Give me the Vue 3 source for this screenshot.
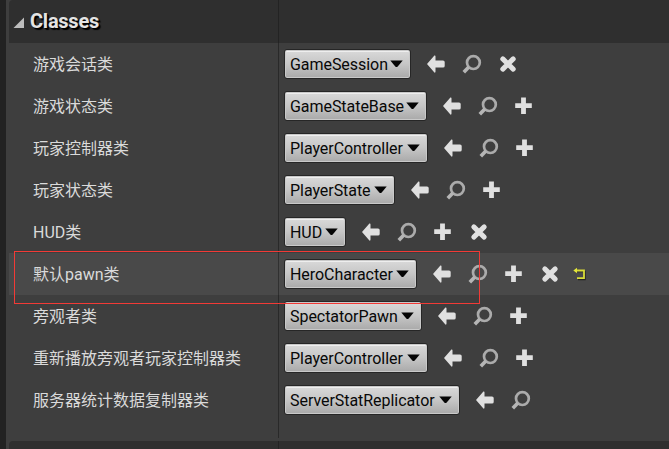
<script setup>
const rows = [
  { label: '游戏会话类', value: 'GameSession', width: 127, icons: ['arrow', 'search', 'clear'] },
  { label: '游戏状态类', value: 'GameStateBase', width: 143, icons: ['arrow', 'search', 'add'] },
  { label: '玩家控制器类', value: 'PlayerController', width: 144, icons: ['arrow', 'search', 'add'] },
  { label: '玩家状态类', value: 'PlayerState', width: 111, icons: ['arrow', 'search', 'add'] },
  { label: 'HUD类', value: 'HUD', width: 62, icons: ['arrow', 'search', 'add', 'clear'] },
  { label: '默认pawn类', value: 'HeroCharacter', width: 133, icons: ['arrow', 'search', 'add', 'clear', 'reset'], active: true },
  { label: '旁观者类', value: 'SpectatorPawn', width: 138, icons: ['arrow', 'search', 'add'] },
  { label: '重新播放旁观者玩家控制器类', value: 'PlayerController', width: 144, icons: ['arrow', 'search', 'add'] },
  { label: '服务器统计数据复制器类', value: 'ServerStatReplicator', width: 176, icons: ['arrow', 'search'] }
]
</script>

<template>
  <div class="panel">
    <div class="content">
      <header class="header">
        <svg class="expander" width="12" height="12" viewBox="0 0 12 12"><path d="M11 0.5V11H0.5Z" fill="#bdbdbd" /></svg>
        <span class="title">Classes</span>
      </header>
      <main class="rows">
        <div v-for="(row, i) in rows" :key="i" class="row" :class="{ active: row.active }">
          <div class="label">{{ row.label }}</div>
          <div class="value">
            <button class="combo" :style="{ width: row.width + 'px' }">
              <span>{{ row.value }}</span>
              <svg width="13" height="8" viewBox="0 0 13 8"><path d="M0.3 0.6H12.7L7.7 6.4Q6.5 7.6 5.3 6.4Z" fill="#050505" /></svg>
            </button>
            <div class="icons">
              <span v-for="icon in row.icons" :key="icon" class="icon" :class="icon">
                <svg v-if="icon === 'arrow'" width="20" height="20" viewBox="0 0 20 20"><path d="M1 10L8.4 1.5Q9.5 1 9.5 2.5V6.5H17Q18.7 6.5 18.7 8V12Q18.7 13.5 17 13.5H9.5V17.5Q9.5 19 8.4 18.5Z" fill="#e0e0e0" /></svg>
                <svg v-else-if="icon === 'search'" width="20" height="20" viewBox="0 0 20 20"><circle cx="11.4" cy="8.6" r="6.4" fill="none" stroke="#ababab" stroke-width="2.7" /><path d="M6.8 13L1.8 18.2" stroke="#b5b5b5" stroke-width="3.6" /></svg>
                <svg v-else-if="icon === 'add'" width="20" height="20" viewBox="0 0 20 20"><path d="M9.5 1.4V18M1.2 9.7H17.8" fill="none" stroke="#e0e0e0" stroke-width="4.8" /></svg>
                <svg v-else-if="icon === 'clear'" width="20" height="20" viewBox="0 0 20 20"><path d="M4.8 4.9L15.2 15.1M15.2 4.9L4.8 15.1" stroke="#e0e0e0" stroke-width="5" stroke-linecap="round" /></svg>
                <svg v-else width="14" height="14" viewBox="0 0 14 14"><g fill="none"><path d="M3 4.5H12V12.5H5" stroke="#252525" stroke-width="1.5" /><path d="M2 3.5H11V11.2H4" stroke="#d9dc38" stroke-width="1.8" /></g><path d="M0.3 3.5L4 0.8V6.2Z" fill="#e2e53a" /></svg>
              </span>
            </div>
          </div>
        </div>
      </main>
      <footer class="next"></footer>
    </div>
    <div class="highlight"></div>
  </div>
</template>

<style>
body { background: #3e3e3e; }
</style>

<style scoped>
.panel {
  position: relative;
  box-sizing: border-box;
  width: 669px;
  height: 449px;
  overflow: hidden;
  border-left: 6px solid #222;
  background: #3e3e3e;
  padding-left: 3px;
  font-family: Roboto, "Noto Sans CJK SC", sans-serif;
}
.content { display: flex; flex-direction: column; height: 449px; }
.header {
  display: flex;
  align-items: center;
  height: 43px;
  box-sizing: border-box;
  padding: 0 0 1px 4px;
  background: linear-gradient(90deg, transparent 269px, #232323 269px 270px, transparent 270px) #2f2f2f;
  border-top-left-radius: 4px;
}
.expander { margin-top: 4px; }
.title {
  margin-left: 5px;
  font-size: 20px;
  line-height: 24px;
  font-weight: 700;
  letter-spacing: -0.25px;
  color: #e4e4e4;
  text-shadow: 1px 1px 0 #000, 2px 2px 1px #000;
}
.rows { height: 395px; background: linear-gradient(90deg, transparent 269px, #292929 269px 270px, transparent 270px); }
.row { display: grid; grid-template-columns: 270px 1fr; height: 42px; }
.row.active { background: linear-gradient(90deg, transparent 269px, #303030 269px 270px, transparent 270px) #494949; }
.label {
  display: flex;
  align-items: center;
  padding: 0 0 2px 24px;
  color: #dadada;
  font-size: 16px;
  white-space: nowrap;
}
.value { display: flex; align-items: center; padding-left: 5px; }
.combo {
  box-sizing: border-box;
  display: flex;
  align-items: center;
  justify-content: space-between;
  flex: none;
  height: 30px;
  padding: 0 7px 0 5px;
  border: 1px solid #262626;
  border-radius: 3px;
  background: linear-gradient(#dadada, #c6c6c6 50%, #a9a9a9);
  box-shadow: inset 0 0 0 1px #c9c9c9, inset 0 2px 0 #eee;
  font: 16px/20px Roboto, sans-serif;
  letter-spacing: -0.05px;
  color: #080808;
  white-space: nowrap;
}
.combo span { padding-top: 2px; }
.combo svg { flex: none; }
.icons { display: flex; align-items: center; padding-left: 7px; }
.icon { display: flex; width: 36px; height: 36px; align-items: center; justify-content: center; }
.icon.reset { width: 24px; }
.next {
  margin-top: 3px;
  height: 8px;
  border-top-left-radius: 4px;
  background: linear-gradient(90deg, transparent 269px, #232323 269px 270px, transparent 270px) #2f2f2f;
}
.highlight {
  position: absolute;
  left: 8px;
  top: 251px;
  width: 466px;
  height: 53px;
  box-sizing: border-box;
  border: 1px solid #f23a36;
  pointer-events: none;
}
</style>
